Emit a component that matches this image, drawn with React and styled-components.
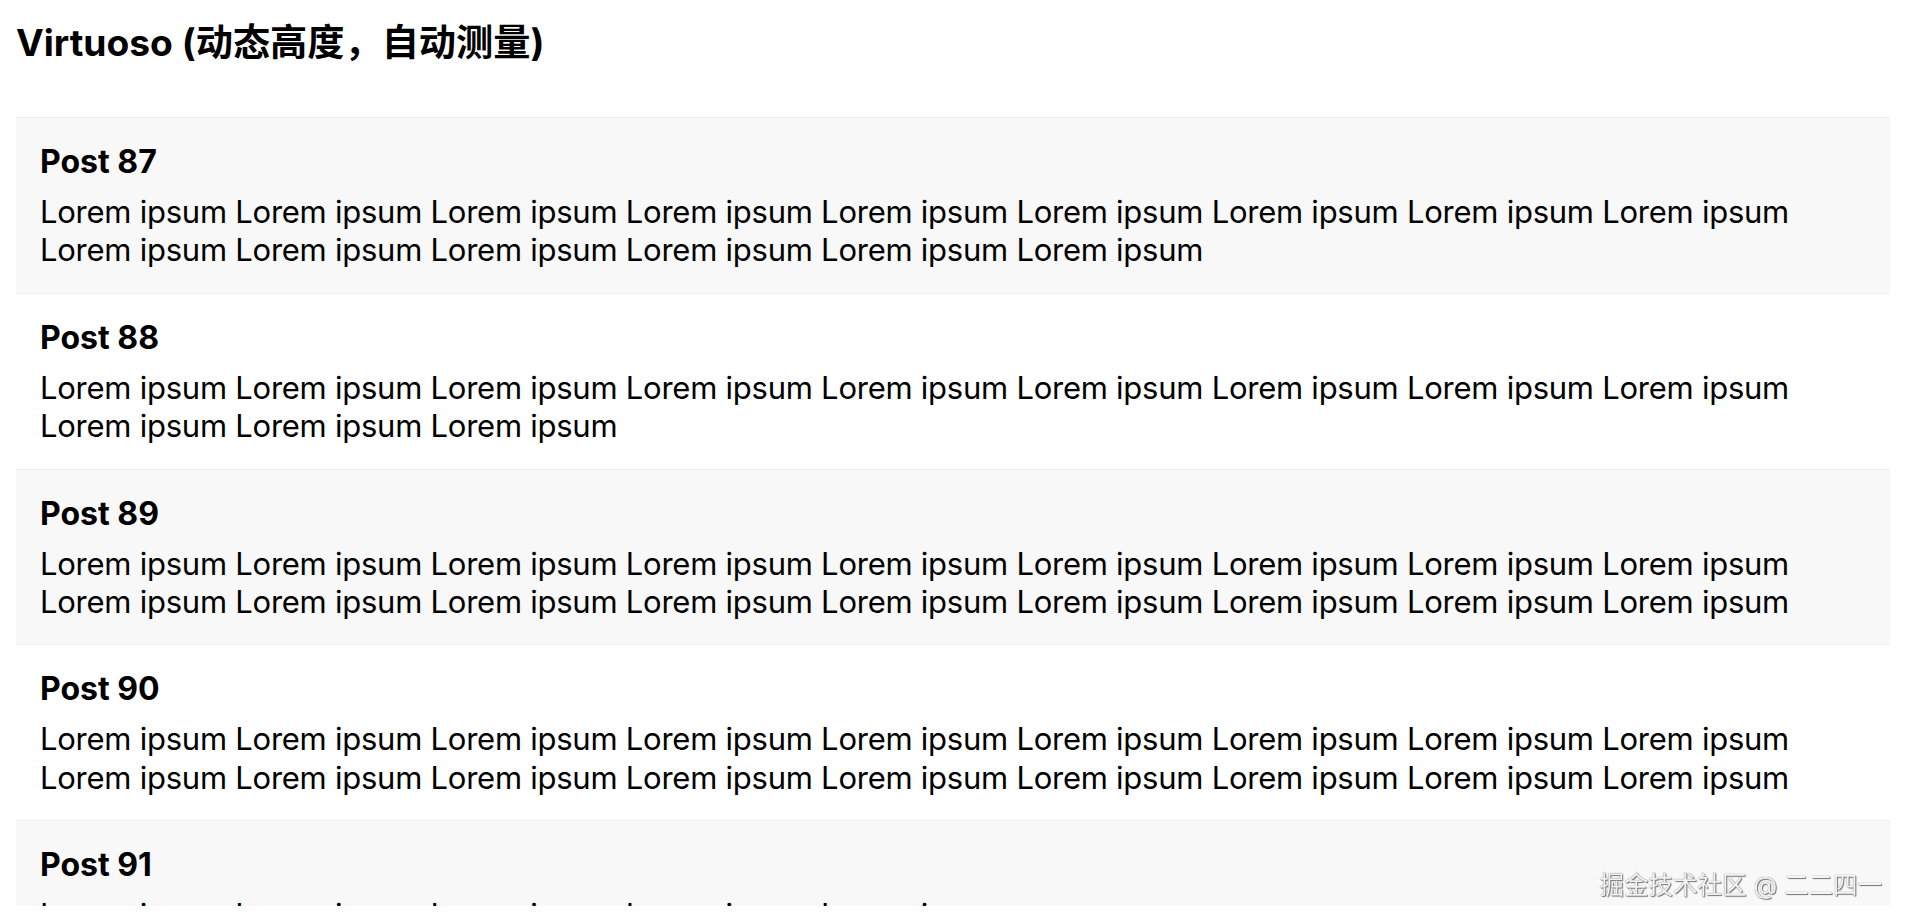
import React from 'react';
import styled, { createGlobalStyle } from 'styled-components';

// Virtuoso 动态高度列表（静态还原）

const GlobalStyle = createGlobalStyle`
  html, body {
    margin: 0;
    background: #fff;
  }
  body {
    font-family: Inter, "Noto Sans CJK SC", sans-serif;
    color: #000;
  }
`;

const posts = [
  { id: 87, count: 15 },
  { id: 88, count: 12 },
  { id: 89, count: 18 },
  { id: 90, count: 18 },
  { id: 91, count: 5 },
  { id: 92, count: 9 },
];

const lorem = (n) => Array(n).fill('Lorem ipsum').join(' ');

function App() {
  return (
    <Page>
      <GlobalStyle />
      <Title>Virtuoso (动态高度，自动测量)</Title>
      <List>
        {posts.map((post, i) => (
          <Item key={post.id} $striped={i % 2 === 0}>
            <PostTitle>Post {post.id}</PostTitle>
            <PostBody>{lorem(post.count)}</PostBody>
          </Item>
        ))}
      </List>
      <Watermark>掘金技术社区 @ 二二四一</Watermark>
    </Page>
  );
}

const Page = styled.div`
  padding: 20px 16px 0;
`;

const Title = styled.h3`
  margin: 0 0 52px;
  font-size: 37.2px;
  line-height: 45px;
  font-weight: 700;
`;

const List = styled.div`
  height: 789px;
  overflow: hidden;
`;

const Item = styled.div`
  background: ${(p) => (p.$striped ? '#f8f8f8' : '#fff')};
  border-top: 1px solid #eeeeee;
  padding: 25px 24px 23px;
`;

const PostTitle = styled.div`
  font-size: 32px;
  line-height: 38px;
  font-weight: 700;
  margin-bottom: 12px;
`;

const PostBody = styled.div`
  font-size: 31px;
  letter-spacing: -0.25px;
  line-height: 38.4px;
`;

const Watermark = styled.div`
  position: fixed;
  right: 24px;
  bottom: 24px;
  font-size: 24.5px;
  line-height: 30px;
  color: #f4f4f4;
  text-shadow: 0 0 1px #555, 1px 1px 1px #777;
`;

export default App;
